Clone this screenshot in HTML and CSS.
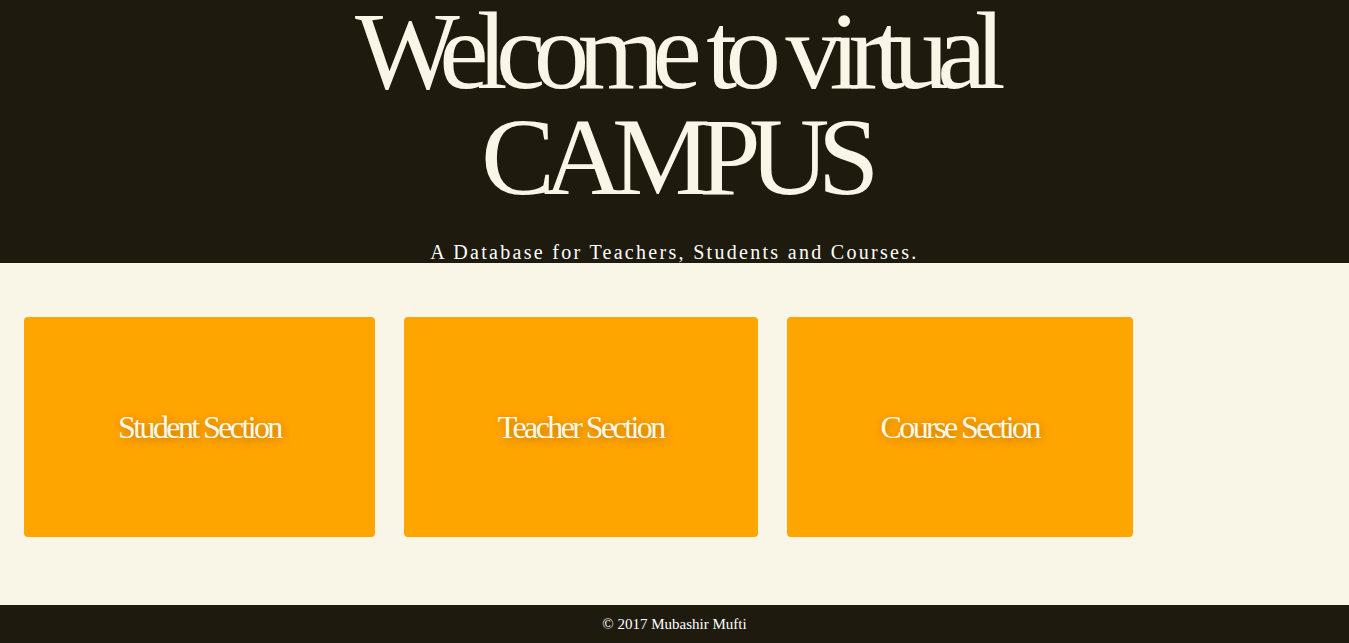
FILE: index.html
```html
<!DOCTYPE html>
<html>
<head>
<meta charset="utf-8">
<title>Virtual Campus</title>
<link rel="stylesheet" href="styles.css">
</head>
<body>
<header class="hero">
  <h1 class="hero-title">Welcome to virtual<br>CAMPUS</h1>
  <p class="hero-sub">A Database for Teachers, Students and Courses.</p>
</header>
<main class="sections">
  <a class="card" href="#">Student Section</a>
  <a class="card" href="#">Teacher Section</a>
  <a class="card" href="#">Course Section</a>
</main>
<footer class="footer">© 2017 Mubashir Mufti</footer>
</body>
</html>
```

FILE: styles.css
```css
html, body {
  margin: 0;
  padding: 0;
}
body {
  background: #faf6e7;
  font-family: "Liberation Serif", "Times New Roman", serif;
}
.hero {
  background: #1e1a0d;
  color: #faf6e7;
  text-align: center;
  height: 263px;
  overflow: hidden;
}
.hero-title {
  margin: -2px 0 0;
  font-size: 111px;
  font-weight: normal;
  line-height: 106px;
  letter-spacing: -11.6px;
}
.hero-sub {
  margin: 30px 0 0;
  font-size: 20px;
  line-height: 24px;
  letter-spacing: 2.3px;
  color: #ffffff;
}
.sections {
  display: flex;
  gap: 29px;
  padding: 54px 24px 68px;
}
.card {
  display: flex;
  align-items: center;
  justify-content: center;
  height: 220px;
  padding: 0 94px;
  background: #ffa500;
  border-radius: 4px;
  color: #fdf9ea;
  text-decoration: none;
  font-size: 32px;
  letter-spacing: -2.6px;
  text-shadow: 1px 2px 8px rgba(150, 90, 0, 0.6);
}
.footer {
  background: #1e1a0d;
  color: #ffffff;
  text-align: center;
  font-size: 15px;
  line-height: 38px;
  height: 38px;
}
```
